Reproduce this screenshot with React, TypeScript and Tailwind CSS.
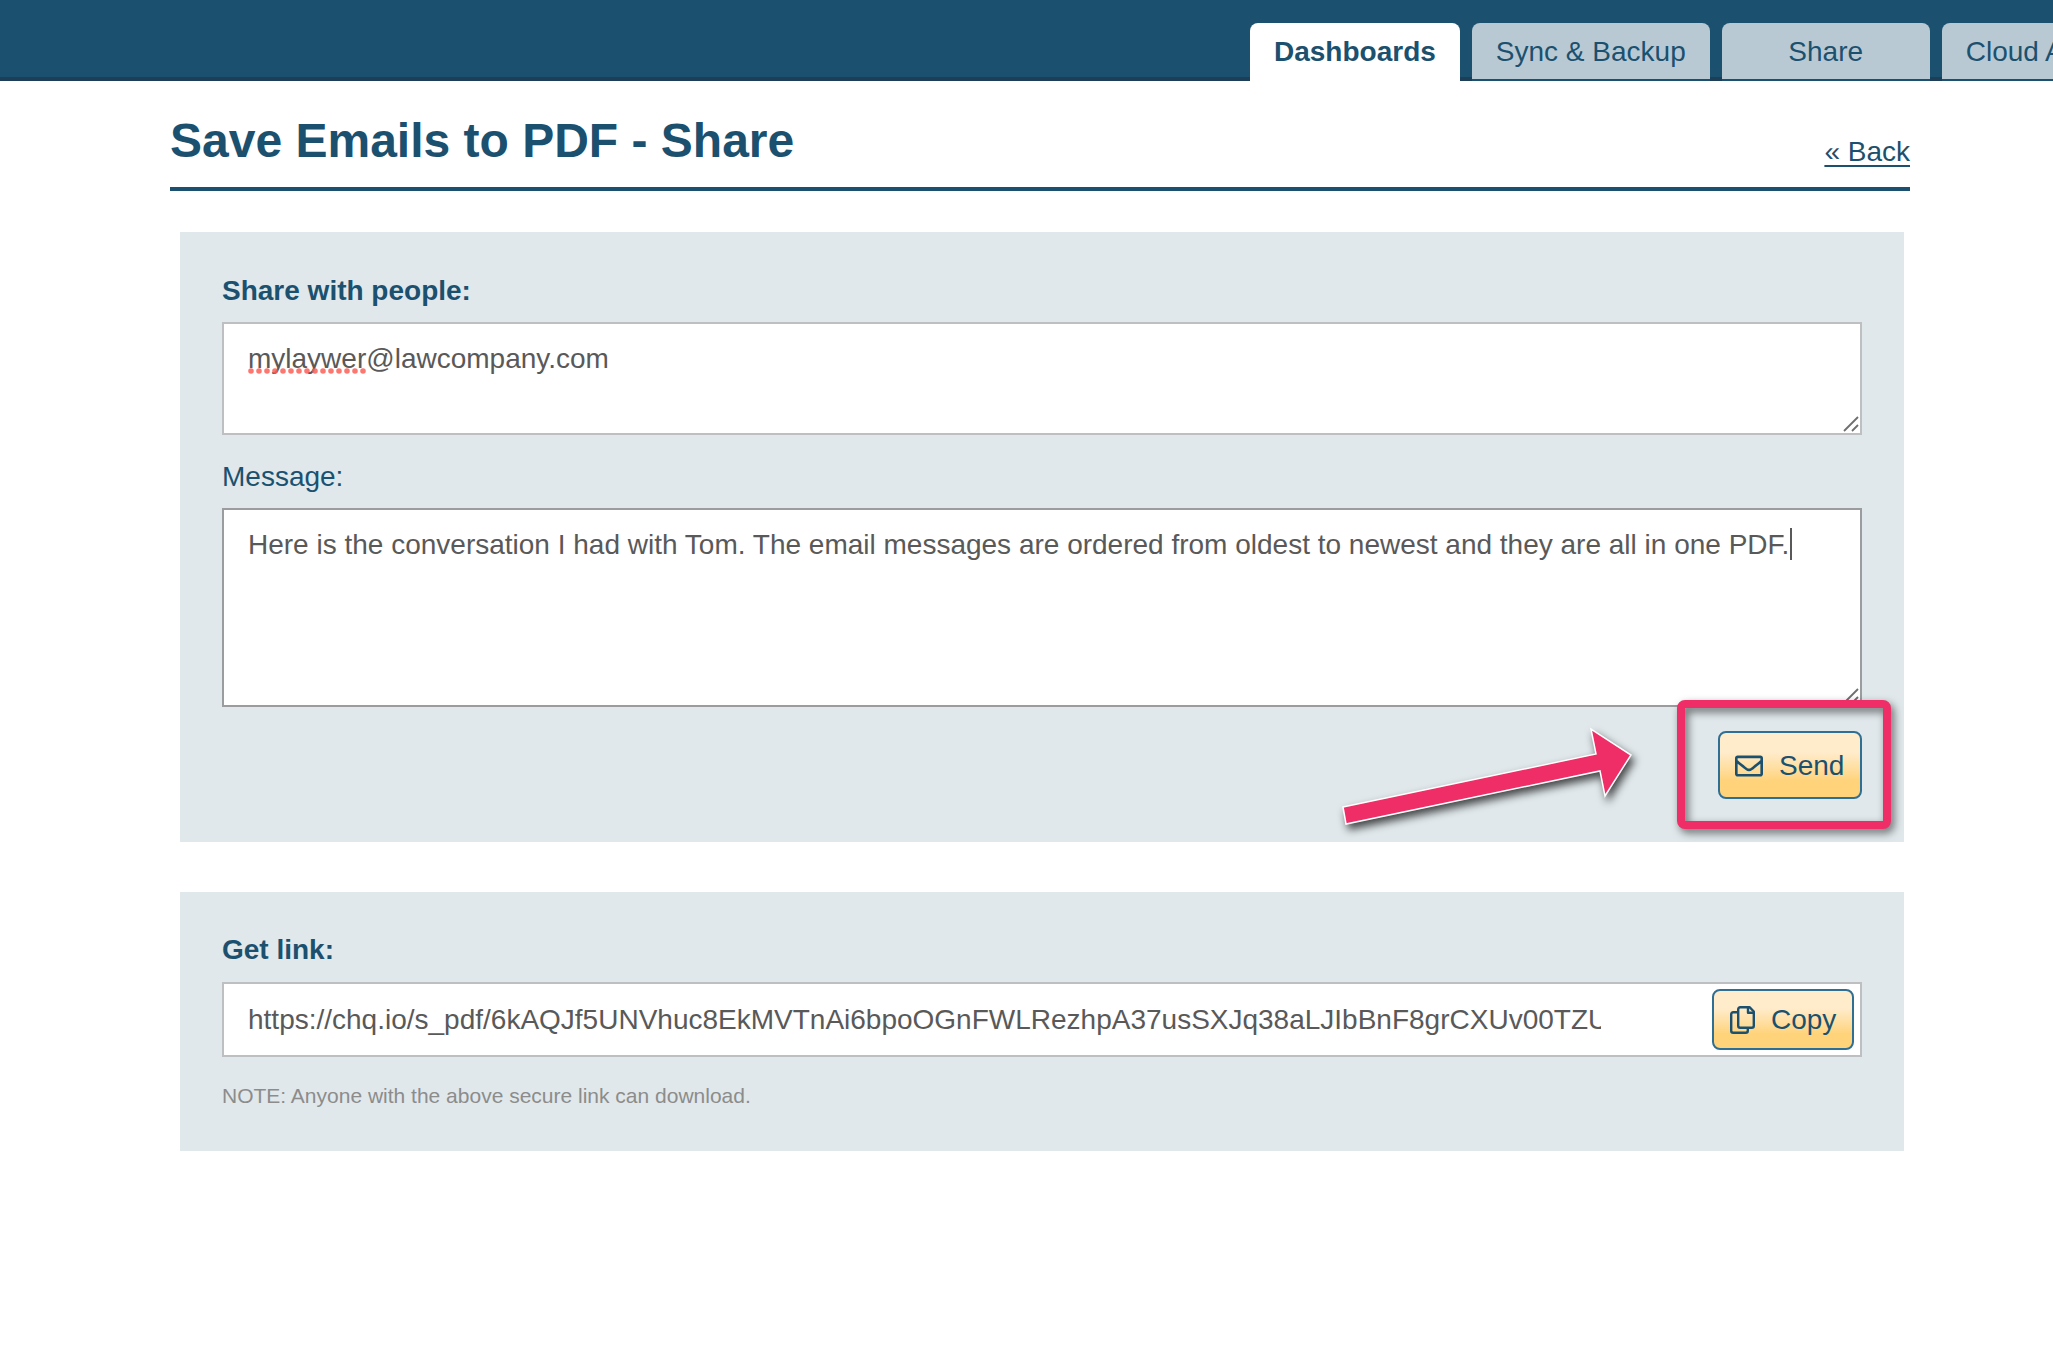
import { FaRegEnvelope } from "react-icons/fa";

const tabs = [
  { label: "Dashboards", active: true },
  { label: "Sync & Backup" },
  { label: "Share" },
  { label: "Cloud Attacher" },
];

const buttonClass =
  "flex shrink-0 items-center rounded-lg border-2 border-[#2f6f94] bg-linear-to-b from-[#ffeccb] from-30% to-[#ffd37a] to-75% text-[28px] leading-8 text-[#1b516f]";

const CopyIcon = () => (
  <svg
    className="h-7 w-[25px]"
    viewBox="0 0 25 28"
    fill="none"
    stroke="currentColor"
    strokeWidth="2.4"
    strokeLinejoin="round"
    aria-hidden="true"
  >
    <path d="M8 6.200H3.200A2 2 0 0 0 1.200 8.200v16.600a2 2 0 0 0 2 2h12.600a2 2 0 0 0 2-2V22" />
    <path d="M10.200 1.200h9.300l4.300 4.300v14.300a2 2 0 0 1-2 2H10.200a2 2 0 0 1-2-2V3.200a2 2 0 0 1 2-2z" />
    <path d="M18 1.200v5.600h5.800" />
  </svg>
);

const ResizeGrip = () => (
  <svg
    className="pointer-events-none absolute right-[3px] bottom-[3px] h-4 w-4"
    viewBox="0 0 16 16"
    stroke="#6f6f6f"
    strokeWidth="1.800"
    aria-hidden="true"
  >
    <path d="M1 15 15 1M9 15l6-6" />
  </svg>
);

const SpellingDots = () => (
  <svg
    className="pointer-events-none absolute top-[46px] left-[26px] h-1.5 w-[120px]"
    viewBox="0 0 120 6"
    aria-hidden="true"
  >
    <path
      d="M3 3h114"
      stroke="#fa5f57"
      strokeOpacity="0.85"
      strokeWidth="5.600"
      strokeLinecap="round"
      strokeDasharray="0 8"
    />
  </svg>
);

const Header = () => (
  <header className="flex border-b-4 border-[#1c3f57] bg-[#1b516f] pt-[23px]">
    <nav className="-mb-1 ml-auto flex w-[803px] shrink-0 gap-3 overflow-hidden whitespace-nowrap">
      {tabs.map((tab) => (
        <a
          key={tab.label}
          href="#"
          className={
            tab.active
              ? "h-[58px] min-w-[208px] shrink-0 rounded-t-lg bg-white px-6 pt-[13px] text-center font-bold"
              : "h-[58px] min-w-[208px] shrink-0 rounded-t-lg border-b-2 border-[#1b516f] bg-[#b9c9d4] px-6 pt-[13px] text-center"
          }
        >
          {tab.label}
        </a>
      ))}
    </nav>
  </header>
);

export default function App() {
  return (
    <div className="min-h-screen overflow-hidden bg-white font-['Liberation_Sans',Arial,sans-serif] text-[28px] leading-8 text-[#1b516f]">
      <Header />
      <main className="pr-[143px] pl-[170px]">
        <div className="flex items-end justify-between border-b-4 border-[#1b516f] pt-8 pb-[19px]">
          <h1 className="text-5xl leading-[55px] font-bold">
            Save Emails to PDF - Share
          </h1>
          <a href="#" className="underline decoration-2 underline-offset-4">
            « Back
          </a>
        </div>

        <section className="relative mt-[41px] mr-[6px] ml-[10px] bg-[#e0e8eb] px-[42px] pt-[43px] pb-[43px]">
          <label htmlFor="people" className="block font-bold">
            Share with people:
          </label>
          <div className="relative mt-[15px]">
            <textarea
              id="people"
              spellCheck={false}
              className="block h-[113px] w-full resize-none border-2 border-[#bdbfc0] bg-white px-6 py-[19px] text-[#595959] outline-none"
              defaultValue="mylaywer@lawcompany.com"
            />
            <SpellingDots />
            <ResizeGrip />
          </div>
          <label htmlFor="message" className="mt-[26px] block">
            Message:
          </label>
          <div className="relative mt-[15px]">
            <textarea
              id="message"
              spellCheck={false}
              className="block h-[199px] w-full resize-none border-2 border-[#9a9c9e] bg-white px-6 py-[19px] text-[#595959] outline-none"
              defaultValue="Here is the conversation I had with Tom. The email messages are ordered from oldest to newest and they are all in one PDF."
            />
            <span className="absolute top-5 left-[1568px] h-8 w-0.5 bg-[#595959]" />
            <ResizeGrip />
          </div>
          <div className="mt-6 flex justify-end">
            <button
              type="button"
              className={`${buttonClass} h-[68px] w-36 gap-4 pt-0.5 pl-[15px]`}
            >
              <FaRegEnvelope className="h-7 w-7" aria-hidden="true" />
              Send
            </button>
          </div>

          <div className="pointer-events-none absolute right-[13px] bottom-[13px] h-[129px] w-[214px] rounded-lg border-8 border-[#ef2d66] drop-shadow-[3px_4px_4px_rgba(0,0,0,0.55)]" />
          <svg
            className="pointer-events-none absolute right-[264px] bottom-2 h-[110px] w-[300px] drop-shadow-[3px_5px_4px_rgba(0,0,0,0.7)]"
            viewBox="1340 724 300 110"
            aria-hidden="true"
          >
            <path
              d="M1343 807 1596 754 1591 729 1631 755 1605 796 1600 771 1346 824Z"
              fill="#ef2d66"
              stroke="#fff"
              strokeWidth="1.500"
            />
          </svg>
        </section>

        <section className="mt-[50px] mr-[6px] ml-[10px] bg-[#e0e8eb] px-[42px] pt-[42px] pb-10">
          <label htmlFor="link" className="block font-bold">
            Get link:
          </label>
          <div className="mt-4 flex h-[75px] items-center border-2 border-[#bdbfc0] bg-white pr-1.5 pl-6">
            <input
              id="link"
              type="text"
              readOnly
              className="mr-auto w-[1353px] min-w-0 text-[#595959] outline-none"
              defaultValue="https://chq.io/s_pdf/6kAQJf5UNVhuc8EkMVTnAi6bpoOGnFWLRezhpA37usSXJq38aLJIbBnF8grCXUv00TZU"
            />
            <button
              type="button"
              className={`${buttonClass} h-[61px] w-[142px] gap-4 pl-4`}
            >
              <CopyIcon />
              Copy
            </button>
          </div>
          <p className="mt-6 text-[21px] leading-[30px] text-[#8c8c8c]">
            NOTE: Anyone with the above secure link can download.
          </p>
        </section>
      </main>
    </div>
  );
}
